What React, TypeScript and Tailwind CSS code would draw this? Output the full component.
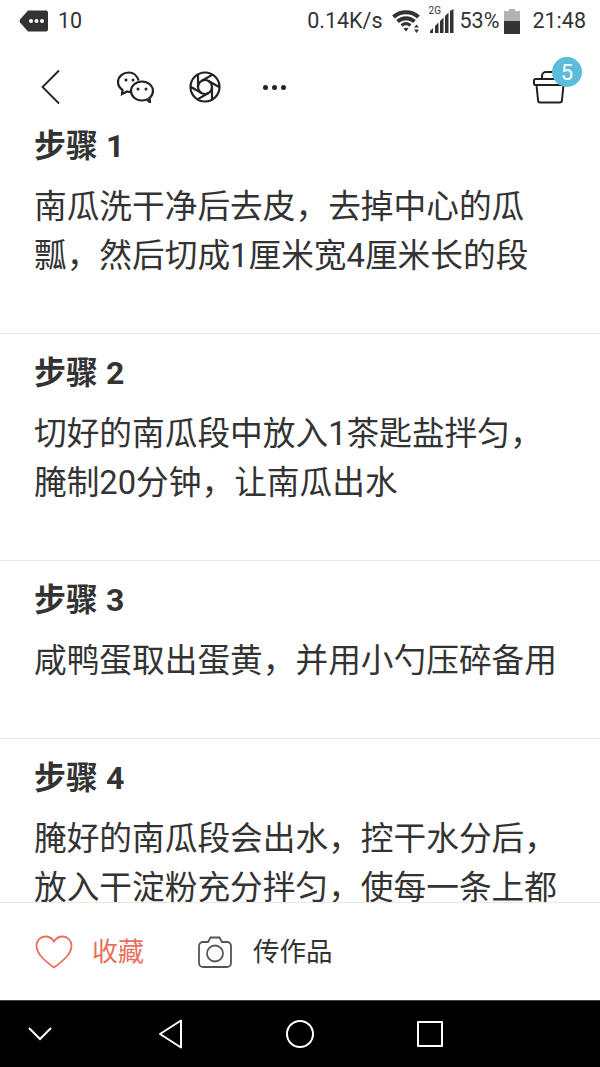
const steps = [
  { title: '步骤 1', lines: ['南瓜洗干净后去皮，去掉中心的瓜', '瓢，然后切成1厘米宽4厘米长的段'] },
  { title: '步骤 2', lines: ['切好的南瓜段中放入1茶匙盐拌匀，', '腌制20分钟，让南瓜出水'] },
  { title: '步骤 3', lines: ['咸鸭蛋取出蛋黄，并用小勺压碎备用'] },
  { title: '步骤 4', lines: ['腌好的南瓜段会出水，控干水分后，', '放入干淀粉充分拌匀，使每一条上都'] },
]

function MessageIcon() {
  return (
    <svg width="30" height="22" viewBox="0 0 30 22" fill="#333">
      <path d="M9 0.5h18a2 2 0 0 1 2 2v17a2 2 0 0 1-2 2H9L1 12.5a3 3 0 0 1 0-3z" />
      <circle cx="12" cy="11" r="2" fill="#fff" />
      <circle cx="17.5" cy="11" r="2" fill="#fff" />
      <circle cx="23" cy="11" r="2" fill="#fff" />
    </svg>
  )
}

function WifiIcon() {
  return (
    <svg width="30" height="24" viewBox="0 0 30 24" fill="none" stroke="#333">
      <path d="M2.500 8C9.500 1.500 20.500 1.500 27.500 8" strokeWidth="4" />
      <path d="M6.500 12.500c5-4.500 12-4.500 17 0" strokeWidth="4" />
      <path d="M10.500 16.500c3-2.500 6-2.500 9 0" strokeWidth="3" />
      <path d="M12.500 19.500q2.500-1.500 5 0l-2.500 3z" fill="#333" stroke="none" />
      <path d="M25.500 15.500l2.500 3h-5zM25.500 24l2.500-3.500h-5z" fill="#333" stroke="none" />
    </svg>
  )
}

function SignalIcon() {
  return (
    <div className="relative h-[24px] w-[24px]">
      <span className="absolute -top-[3px] -left-[1px] font-['Roboto',sans-serif] text-[10px] leading-[10px] text-[#333]">2G</span>
      <svg className="absolute inset-0" width="24" height="24" viewBox="0 0 24 24" fill="#333">
        <path d="M0 24v-2l3-3v5zM5 24v-7l3.500-3.500V24zM10 24V12l3.500-3.500V24zM15 24V7l3.500-3.500V24zM20 24V2l3.500-2v24z" />
      </svg>
    </div>
  )
}

function BatteryIcon() {
  return (
    <svg width="16" height="25" viewBox="0 0 16 25">
      <path d="M5 0h6v2h5v10H0V2h5z" fill="#b3b3b3" />
      <rect x="0" y="12" width="16" height="13" fill="#333" />
    </svg>
  )
}

function StatusBar() {
  return (
    <div className="flex h-[42px] shrink-0 items-center justify-between bg-white pr-[14px] pl-[19px] font-['Roboto',sans-serif] text-[21.5px] text-[#333]">
      <div className="flex items-center gap-[9px]">
        <MessageIcon />
        <span>10</span>
      </div>
      <div className="flex items-center">
        <span>0.14K/s</span>
        <div className="ml-[8px]"><WifiIcon /></div>
        <div className="ml-[9px]"><SignalIcon /></div>
        <span className="ml-[6px]">53%</span>
        <div className="ml-[5px]"><BatteryIcon /></div>
        <span className="ml-[12px]">21:48</span>
      </div>
    </div>
  )
}

function BackIcon() {
  return (
    <svg width="28" height="36" viewBox="0 0 28 36" fill="none" stroke="#222" strokeWidth="1.800">
      <path d="M23 1.500 6.500 18 23 34.500" />
    </svg>
  )
}

function WechatIcon() {
  return (
    <svg width="38" height="32" viewBox="0 0 38 32" fill="none" stroke="#222" strokeWidth="2.200">
      <path d="M21.500 9.500C20 4.500 16 1.500 12 1.500 6 1.500 1 5.500 1 11c0 3.500 1.800 6 4.500 8L5 23l5-2.500c1.800.4 3 .6 4.500.5" />
      <ellipse cx="25" cy="20" rx="11" ry="9.500" fill="#fff" />
      <path d="M30 28.500l3 3-.5-5" fill="#fff" />
      <circle cx="9" cy="9" r="1.500" fill="#222" stroke="none" />
      <circle cx="16" cy="9" r="1.500" fill="#222" stroke="none" />
      <circle cx="21" cy="18" r="1.500" fill="#222" stroke="none" />
      <circle cx="29" cy="18" r="1.500" fill="#222" stroke="none" />
    </svg>
  )
}

function ApertureIcon() {
  return (
    <svg width="32" height="32" viewBox="0 0 32 32" fill="none" stroke="#222" strokeWidth="2.200">
      <circle cx="16" cy="16" r="14.500" />
      <circle cx="16" cy="16" r="7" />
      <path d="M23 16V28.700M19.500 22.060 8.500 28.410M12.500 22.060 1.500 15.710M9 16V3.300M12.500 9.940 23.500 3.590M19.500 9.940 30.500 16.290" />
    </svg>
  )
}

function BasketIcon() {
  return (
    <svg width="34" height="34" viewBox="0 0 34 34" fill="none" stroke="#222" strokeWidth="2">
      <path d="M9 9V6a4 4 0 0 1 4-4h10a4 4 0 0 1 4 4v3" />
      <rect x="1" y="9" width="32" height="6" rx="1.500" fill="#fff" />
      <path d="M3.500 15 5 30a2.500 2.500 0 0 0 2.500 2.500h19A2.500 2.500 0 0 0 29 30l1.500-15" />
    </svg>
  )
}

function NavBar() {
  return (
    <div className="relative z-10 flex h-[84px] shrink-0 items-center bg-white pt-[6px] pr-[33px] pl-[36px]">
      <BackIcon />
      <div className="ml-[53px]"><WechatIcon /></div>
      <div className="ml-[34px]"><ApertureIcon /></div>
      <div className="ml-[42px] flex gap-[4px]">
        <span className="h-[5px] w-[5px] rounded-full bg-[#222]" />
        <span className="h-[5px] w-[5px] rounded-full bg-[#222]" />
        <span className="h-[5px] w-[5px] rounded-full bg-[#222]" />
      </div>
      <div className="relative ml-auto">
        <BasketIcon />
        <span className="absolute -top-[13px] left-[19px] flex h-[30px] w-[30px] items-center justify-center rounded-full bg-[#5cbcdd] font-['Roboto',sans-serif] text-[22px] text-white">5</span>
      </div>
    </div>
  )
}

function Step({ title, lines }: { title: string; lines: string[] }) {
  return (
    <section className="border-b border-[#e8e8e8] pt-[23px] pr-[20px] pb-[52px] pl-[34px] text-[#333]">
      <h3 className="h-[32px] text-[32px] leading-[32px] font-bold">{title}</h3>
      <div className="mt-[21px] text-[32.700px] leading-[49px]">
        {lines.map((line) => (
          <p key={line} className="whitespace-nowrap">{line}</p>
        ))}
      </div>
    </section>
  )
}

function HeartIcon() {
  return (
    <svg width="38" height="34" viewBox="0 0 38 34" fill="none" stroke="#e8705c" strokeWidth="1.800">
      <path d="M19 32.500C10 26 1.500 19 1.500 10.500 1.500 5.500 5.500 1.500 10.500 1.500c3.500 0 6.500 1.800 8.500 5 2-3.200 5-5 8.500-5 5 0 9 4 9 9 0 8.500-8.500 15.500-17.500 22z" />
    </svg>
  )
}

function CameraIcon() {
  return (
    <svg width="34" height="32" viewBox="0 0 34 32" fill="none" stroke="#555" strokeWidth="1.800">
      <path d="M5 6h5l2.500-4.500h9L24 6h5a4 4 0 0 1 4 4v17a4 4 0 0 1-4 4H5a4 4 0 0 1-4-4V10a4 4 0 0 1 4-4z" />
      <circle cx="17" cy="17.500" r="8" />
    </svg>
  )
}

function BottomBar() {
  return (
    <div className="flex h-[98px] shrink-0 items-center border-t border-[#ece8e0] bg-white pl-[35px]">
      <HeartIcon />
      <span className="ml-[19px] text-[26px] leading-[36px] text-[#e8705c]">收藏</span>
      <div className="ml-[54px]"><CameraIcon /></div>
      <span className="ml-[21px] text-[26.500px] leading-[36px] text-[#333]">传作品</span>
    </div>
  )
}

function SystemNav() {
  return (
    <div className="flex h-[67px] shrink-0 items-center gap-[102px] border-t border-[#444] bg-black pl-[26px]">
      <svg width="28" height="28" viewBox="0 0 28 28" fill="none" stroke="#fff" strokeWidth="2">
        <path d="M3 8l11 11L25 8" />
      </svg>
      <svg width="28" height="30" viewBox="0 0 28 30" fill="none" stroke="#fff" strokeWidth="2">
        <path d="M25 1.500v27L4 15z" strokeLinejoin="round" />
      </svg>
      <svg width="30" height="30" viewBox="0 0 30 30" fill="none" stroke="#fff" strokeWidth="2">
        <circle cx="14" cy="15" r="13" />
      </svg>
      <div className="-ml-[1px] h-[26px] w-[26px] rounded-[1px] border-2 border-white" />
    </div>
  )
}

export default function App() {
  return (
    <div className="flex h-[1067px] w-[600px] flex-col overflow-hidden bg-white font-['Roboto','Noto_Sans_CJK_SC','Noto_Sans',sans-serif]">
      <StatusBar />
      <NavBar />
      <div className="min-h-0 flex-1 overflow-hidden">
        <div className="-mt-[19px]">
          {steps.map((step) => (
            <Step key={step.title} title={step.title} lines={step.lines} />
          ))}
        </div>
      </div>
      <BottomBar />
      <SystemNav />
    </div>
  )
}
